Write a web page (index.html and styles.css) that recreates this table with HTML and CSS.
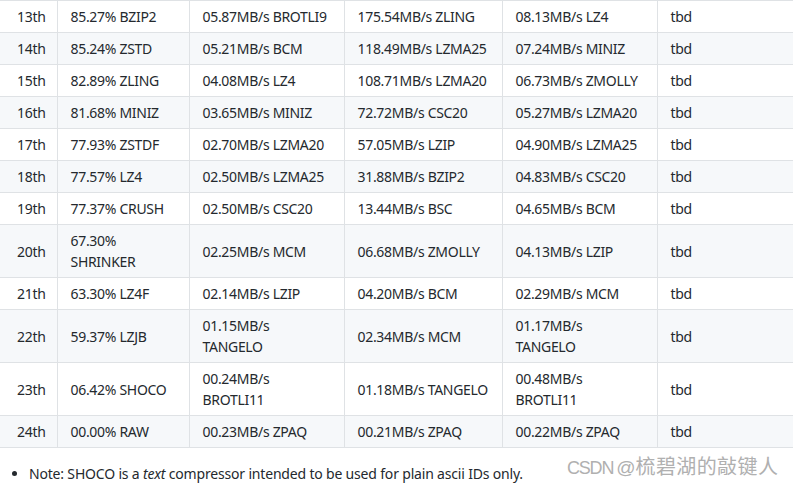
FILE: index.html
```html
<!DOCTYPE html>
<html>
<head>
<meta charset="utf-8">
<link rel="stylesheet" href="styles.css">
</head>
<body>
<div class="page">
  <div class="table-wrap">
    <table class="bench">
      <colgroup>
        <col class="c1"><col class="c2"><col class="c3"><col class="c4"><col class="c5"><col class="c6">
      </colgroup>
      <tbody>
        <tr><td>13th</td><td>85.27% BZIP2</td><td>05.87MB/s BROTLI9</td><td>175.54MB/s ZLING</td><td>08.13MB/s LZ4</td><td>tbd</td></tr>
        <tr><td>14th</td><td>85.24% ZSTD</td><td>05.21MB/s BCM</td><td>118.49MB/s LZMA25</td><td>07.24MB/s MINIZ</td><td>tbd</td></tr>
        <tr><td>15th</td><td>82.89% ZLING</td><td>04.08MB/s LZ4</td><td>108.71MB/s LZMA20</td><td>06.73MB/s ZMOLLY</td><td>tbd</td></tr>
        <tr><td>16th</td><td>81.68% MINIZ</td><td>03.65MB/s MINIZ</td><td>72.72MB/s CSC20</td><td>05.27MB/s LZMA20</td><td>tbd</td></tr>
        <tr><td>17th</td><td>77.93% ZSTDF</td><td>02.70MB/s LZMA20</td><td>57.05MB/s LZIP</td><td>04.90MB/s LZMA25</td><td>tbd</td></tr>
        <tr><td>18th</td><td>77.57% LZ4</td><td>02.50MB/s LZMA25</td><td>31.88MB/s BZIP2</td><td>04.83MB/s CSC20</td><td>tbd</td></tr>
        <tr><td>19th</td><td>77.37% CRUSH</td><td>02.50MB/s CSC20</td><td>13.44MB/s BSC</td><td>04.65MB/s BCM</td><td>tbd</td></tr>
        <tr><td>20th</td><td>67.30%<br>SHRINKER</td><td>02.25MB/s MCM</td><td>06.68MB/s ZMOLLY</td><td>04.13MB/s LZIP</td><td>tbd</td></tr>
        <tr><td>21th</td><td>63.30% LZ4F</td><td>02.14MB/s LZIP</td><td>04.20MB/s BCM</td><td>02.29MB/s MCM</td><td>tbd</td></tr>
        <tr><td>22th</td><td>59.37% LZJB</td><td>01.15MB/s<br>TANGELO</td><td>02.34MB/s MCM</td><td>01.17MB/s<br>TANGELO</td><td>tbd</td></tr>
        <tr><td>23th</td><td>06.42% SHOCO</td><td>00.24MB/s<br>BROTLI11</td><td>01.18MB/s TANGELO</td><td>00.48MB/s<br>BROTLI11</td><td>tbd</td></tr>
        <tr><td>24th</td><td>00.00% RAW</td><td>00.23MB/s ZPAQ</td><td>00.21MB/s ZPAQ</td><td>00.22MB/s ZPAQ</td><td>tbd</td></tr>
      </tbody>
    </table>
  </div>
  <ul class="notes">
    <li>Note: SHOCO is a <em>text</em> compressor intended to be used for plain ascii IDs only.</li>
  </ul>
  <div class="watermark"><span class="wm-latin">CSDN</span> <span class="wm-at">@</span><span class="wm-cjk">梳碧湖的敲键人</span></div>
</div>
</body>
</html>
```

FILE: styles.css
```css
html, body {
  margin: 0;
  padding: 0;
  background: #ffffff;
}

body {
  font-family: "Noto Sans", "Open Sans", "Noto Sans CJK SC", sans-serif;
  font-size: 14px;
  line-height: 21px;
  letter-spacing: -0.3px;
  color: #24292e;
}

.page {
  position: relative;
  width: 793px;
  height: 487px;
  overflow: hidden;
}

.table-wrap {
  width: 793px;
  overflow: hidden;
}

.bench {
  border-collapse: collapse;
  table-layout: fixed;
  width: 820px;
}

.c1 { width: 57px; }
.c2 { width: 132px; }
.c3 { width: 155px; }
.c4 { width: 158px; }
.c5 { width: 155px; }
.c6 { width: 163px; }

.bench td {
  border: 1px solid #dfe2e5;
  padding: 5px 13px;
  vertical-align: middle;
  white-space: nowrap;
  overflow: hidden;
}

.bench td:first-child {
  border-left: none;
  padding-left: 17px;
  padding-right: 4px;
}

.bench tr:nth-child(even) td {
  background: #f6f8fa;
}

.notes {
  margin: 15px 0 0 0;
  padding-left: 29px;
  letter-spacing: -0.18px;
}

.notes li {
  line-height: 21px;
}

.watermark {
  position: absolute;
  left: 567px;
  top: 453px;
  display: flex;
  align-items: baseline;
  font-family: "Liberation Sans", "Noto Sans CJK SC", sans-serif;
  line-height: 26px;
  letter-spacing: 0;
  color: #b0b0b0;
  text-shadow: 0 0 1px #fff, 0 0 2px #fff;
  white-space: pre;
}

.wm-latin {
  font-size: 18px;
  letter-spacing: -1.2px;
}

.wm-at {
  font-size: 19px;
  margin-left: 3px;
}

.wm-cjk {
  font-family: "Noto Sans CJK SC", sans-serif;
  font-size: 20px;
  letter-spacing: 0.4px;
}
```
